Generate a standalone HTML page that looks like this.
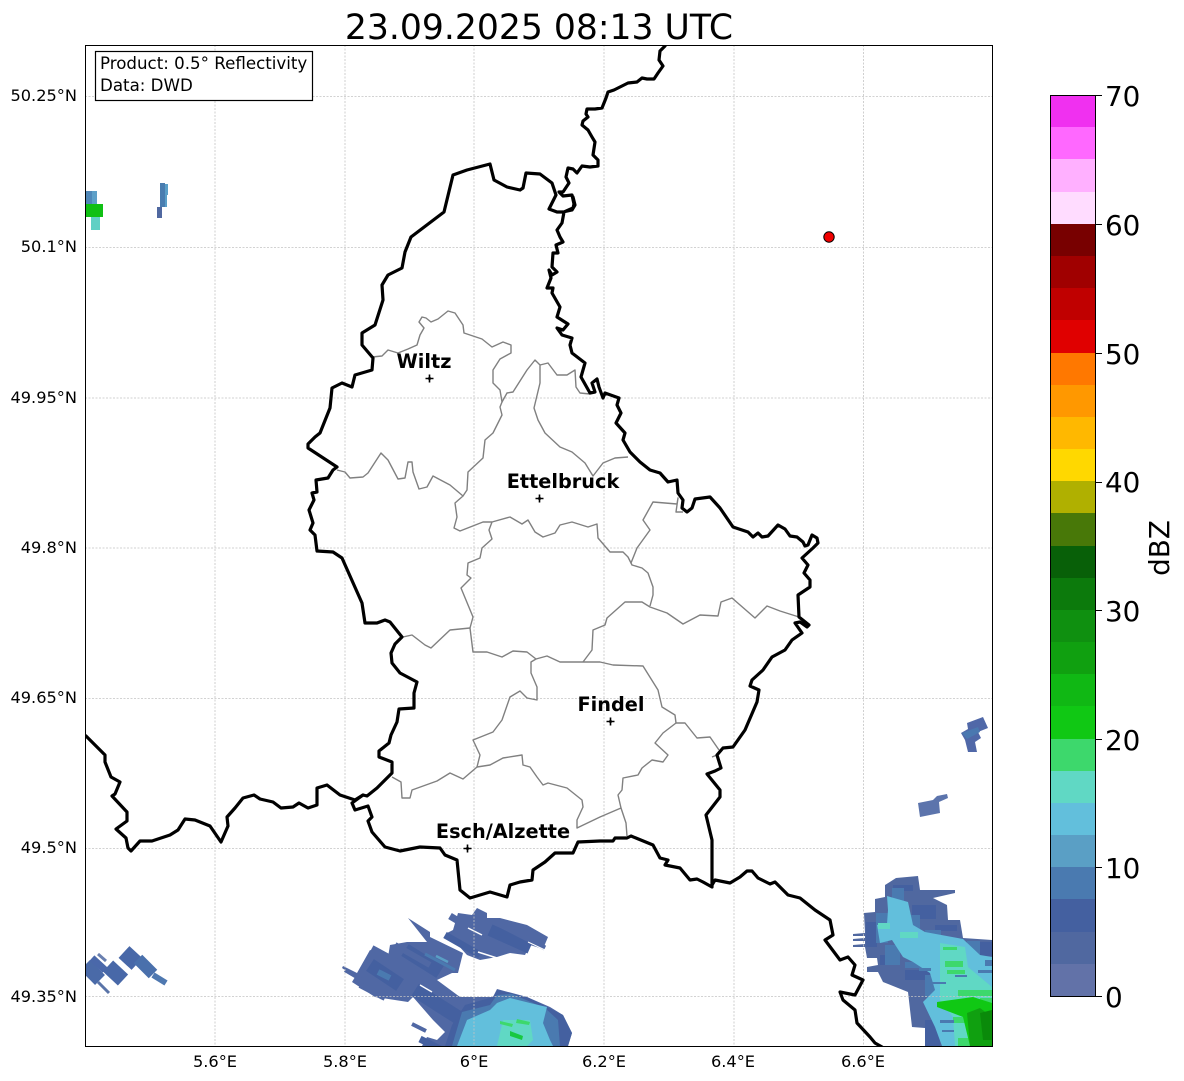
<!DOCTYPE html>
<html>
<head>
<meta charset="utf-8">
<title>Radar</title>
<style>
html,body{margin:0;padding:0;background:#fff;width:1184px;height:1081px;overflow:hidden}
svg{display:block}
text{font-family:"DejaVu Sans","Liberation Sans",sans-serif;fill:#000}
.tick{font-size:16.2px}
.cb{font-size:27.8px}
.st{font-size:19.3px;font-weight:bold;text-anchor:middle}
.g{stroke:#c4c4c4;stroke-width:.8;stroke-dasharray:2 1.5;fill:none}
.b{stroke:#000;stroke-width:3.2;fill:none;stroke-linejoin:round;stroke-linecap:round}
.c{stroke:#808080;stroke-width:1.4;fill:none;stroke-linejoin:round}
</style>
</head>
<body>
<svg width="1184" height="1081" viewBox="0 0 1184 1081" xmlns="http://www.w3.org/2000/svg">
<defs><clipPath id="ax"><rect x="85.5" y="45.5" width="907" height="1001"/></clipPath></defs>
<rect width="1184" height="1081" fill="#fff"/>
<text x="539" y="39" font-size="34.6" text-anchor="middle">23.09.2025 08:13 UTC</text>

<g clip-path="url(#ax)">
<!-- radar top-left -->
<rect x="86" y="191" width="6" height="13" fill="#4f87b8"/><rect x="92" y="191" width="5" height="13" fill="#5ea0c8"/>
<rect x="86" y="204" width="17" height="13" fill="#10c014"/>
<rect x="91" y="217" width="9" height="13" fill="#60d0c4"/>
<rect x="160" y="183" width="5" height="24" fill="#4a7db0"/><rect x="165" y="184" width="3" height="11" fill="#5b9fc8"/><rect x="165" y="195" width="2" height="12" fill="#5b9fc8"/>
<rect x="157" y="207" width="5" height="11" fill="#5068a0"/>

<!-- SW small blobs -->
<g fill="none" stroke-linecap="butt">
<path d="M85 965L100 980" stroke="#4a6aa8" stroke-width="14"/>
<path d="M92 958L105 970" stroke="#4a68aa" stroke-width="7"/>
<path d="M98 954L106 961" stroke="#6a80b0" stroke-width="3"/>
<path d="M108 966L123 980" stroke="#4868a8" stroke-width="15"/>
<path d="M98 982L109 993" stroke="#5a74a8" stroke-width="3"/>
<path d="M124 952L137 964" stroke="#4868a8" stroke-width="16"/>
<path d="M138 959L153 974" stroke="#4a70ac" stroke-width="12"/>
<path d="M153 975L166 983" stroke="#4f78b0" stroke-width="6"/>
</g>

<!-- bottom centre blobs -->
<polygon fill="#5068a4" points="458,913 472,915 477,908 487,913 487,918 500,918 527,925 548,937 543,949 530,945 525,955 510,953 497,957 480,960 467,955 447,933 453,930"/>
<polygon fill="#5068a4" points="408,918 430,932 430,937 463,953 458,973 452,973 437,980 460,997 493,997 497,989 527,997 550,1007 563,1015 572,1033 568,1046 422,1046 427,1037 437,1040 445,1032 433,1020 413,997 408,1002 375,997 352,982 355,977 342,968 343,966 357,973 370,950 388,957 390,945 407,942 427,942"/>
<g fill="none" stroke="#4460a0">
<path d="M370 965L400 985" stroke-width="14"/>
<path d="M405 950L440 972" stroke-width="14"/>
<path d="M415 990L470 1025" stroke-width="14"/>
<path d="M490 930L530 948" stroke-width="12"/>
<path d="M445 935L480 955" stroke-width="7"/>
</g>
<g fill="none" stroke="#5068a4">
<path d="M345 970L362 980" stroke-width="4"/>
<path d="M450 916L470 928" stroke-width="7"/>
<path d="M500 925L545 948" stroke-width="5"/>
<path d="M372 948L398 962" stroke-width="6"/>
<path d="M395 945L430 965" stroke-width="6"/>
<path d="M360 985L385 998" stroke-width="6"/>
</g>
<g fill="none" stroke="#fff">
<path d="M468 928L482 935" stroke-width="1.500"/>
<path d="M478 952L497 958" stroke-width="1.500"/>
<path d="M420 985L432 992" stroke-width="1.500"/>
<path d="M528 942L545 950" stroke-width="1"/>
</g>
<path d="M378 972L390 978" stroke="#4a7ab0" stroke-width="6"/>
<path d="M436 956L448 962" stroke="#5a9fc5" stroke-width="2.500"/>
<path d="M425 954L455 970" stroke="#4a7ab0" stroke-width="3"/>
<polygon fill="#4460a0" points="445,1046 452,1025 465,1005 493,997 497,990 527,997 563,1015 572,1033 568,1046"/>
<polygon fill="#4a7ab0" points="452,1046 462,1012 490,1005 497,995 512,994 545,1008 558,1020 560,1046"/>
<polygon fill="#62bfdc" points="457,1046 467,1020 490,1010 497,1003 510,998 530,1003 547,1007 543,1023 550,1040 553,1046"/>
<polygon fill="#60d8c4" points="503,1020 530,1020 533,1040 527,1046 497,1046"/>
<polygon fill="#3dd86c" points="500,1021 513,1024 512,1027 500,1024"/>
<polygon fill="#3dd86c" points="517,1019 530,1022 529,1025 516,1023"/>
<polygon fill="#18c840" points="510,1031 523,1036 522,1040 510,1036"/>
<path d="M412 1024L426 1031" stroke="#5068a4" stroke-width="4" fill="none"/>
<path d="M420 1039L440 1049" stroke="#4460a0" stroke-width="7" fill="none"/>

<!-- SE blob -->
<polygon fill="#5068a0" points="896,878 918,876 920,890 955,890 955,893 933,898 947,905 948,920 960,920 963,938 992,940 992,1046 927,1046 925,1028 912,1027 908,992 883,982 878,972 867,972 867,967 878,965 877,958 867,958 865,947 853,947 853,945 865,944 865,941 853,941 853,939 865,938 865,936 853,936 853,934 865,933 864,913 875,912 875,899 885,897 885,885"/>
<g fill="#4460a0">
<rect x="866" y="922" width="11" height="25"/>
<rect x="880" y="955" width="15" height="10"/>
<rect x="893" y="885" width="20" height="6"/>
<rect x="912" y="905" width="24" height="14"/>
<rect x="905" y="970" width="25" height="10"/>
<rect x="935" y="925" width="22" height="6"/>
<rect x="925" y="1020" width="15" height="26"/>
<rect x="980" y="942" width="12" height="14"/>
</g>
<g fill="#4a7ab0">
<rect x="876" y="913" width="12" height="30"/>
<rect x="892" y="888" width="12" height="14"/>
<rect x="900" y="915" width="20" height="18"/>
<rect x="885" y="945" width="15" height="20"/>
<rect x="925" y="930" width="16" height="10"/>
<rect x="967" y="941" width="13" height="14"/>
<rect x="905" y="962" width="20" height="6"/>
<rect x="925" y="975" width="12" height="22"/>
</g>
<polygon fill="#62bfdc" points="887,896 908,902 913,925 925,932 963,939 980,955 992,957 992,1046 942,1046 935,1027 923,1002 935,990 930,973 913,962 903,957 892,940 880,943 877,925 887,924 888,910"/>
<polygon fill="#60d8c4" points="940,943 965,947 968,967 992,987 992,1046 955,1046 953,1017 940,1000 940,963"/>
<rect x="878" y="923" width="12" height="6" fill="#60d8c4"/>
<rect x="900" y="932" width="18" height="6" fill="#60d8c4"/>
<g fill="#3dd86c">
<rect x="945" y="961" width="18" height="6"/>
<rect x="943" y="947" width="14" height="3"/>
<rect x="947" y="970" width="18" height="4"/>
<rect x="958" y="990" width="34" height="6"/>
<rect x="953" y="1017" width="14" height="6"/>
<rect x="958" y="1038" width="12" height="8"/>
<rect x="980" y="998" width="12" height="10"/>
</g>
<g fill="#4a7ab0">
<rect x="919" y="968" width="12" height="3"/>
<rect x="932" y="982" width="14" height="2"/>
<rect x="955" y="975" width="12" height="2"/>
<rect x="940" y="1020" width="14" height="3"/>
<rect x="942" y="1030" width="12" height="2"/>
<rect x="985" y="960" width="7" height="6"/>
<rect x="978" y="970" width="14" height="3"/>
</g>
<polygon fill="#10c814" points="937,1002 973,997 992,1003 992,1046 970,1046 963,1017 937,1007"/>
<polygon fill="#10a010" points="967,1013 980,1008 992,1017 992,1046 970,1046"/>
<polygon fill="#0a8a0a" points="980,1013 992,1010 992,1040 983,1040"/>

<!-- E small blobs -->
<polygon fill="#5068a8" points="967,723 983,717 988,728 978,732 981,738 975,742 977,752 968,752 965,740 961,733 968,729"/>
<polygon fill="#4a78b0" points="962,733 978,727 980,732 967,739"/>
<polygon fill="#5c74ac" points="918,803 933,800 937,796 947,794 948,798 939,802 940,813 920,817"/>

<!-- grid -->
<g class="g">
<path d="M215 45V1046M345 45V1046M474 45V1046M604 45V1046M734 45V1046M863.500 45V1046"/>
<path d="M85 96.500H992M85 247.500H992M85 398H992M85 548H992M85 698.500H992M85 848.500H992M85 996.500H992"/>
</g>

<!-- interior gray -->
<g class="c">
<path d="M372 357L382 356L388 350L398 353L408 349L417 345L420 335L424 328L419 322L422 317L426 318L431 322L438 319L448 311L455 313L463 325L464 333L482 339L492 347L503 342L511 345L511 353L500 359L493 370L493 383L500 390L502 402L500 407L502 415L493 433L485 440L483 458L468 472L467 490L463 496"/>
<path d="M502 402L507 393L513 392L527 370L535 360L540 365L540 383L534 408L538 420L545 433L560 447L572 452L585 463L593 476L603 463L615 458L628 457"/>
<path d="M540 365L548 363L557 375L567 375L575 370L576 387L580 393L590 394"/>
<path d="M337 470L345 472L350 478L363 477L368 473L381 453L388 460L398 479L405 478L408 462L412 462L413 472L419 489L427 487L433 476L450 485L463 496L455 503L457 517L454 528L460 531L483 522L492 522L510 517L522 524L528 520L535 532L543 537L555 533L560 525L572 522L588 527L597 524L598 538L610 552L623 552L628 557L631 563"/>
<path d="M492 522L489 530L492 539L482 548L480 558L468 563L467 575L471 578L461 588L473 617L470 628"/>
<path d="M403 637L412 635L425 645L431 648L450 630L470 628L473 652L487 652L502 657L513 651L527 652L536 659L547 656L560 662L583 662L600 662L613 665L643 666L658 690L662 707L675 715L676 723L685 723L697 738L710 737L719 750"/>
<path d="M676 723L663 733L655 743L668 755L663 762L652 760L642 768L638 775L623 778L622 790L618 795L621 808L626 823L627 836"/>
<path d="M621 808L600 817L577 828L577 820L583 807L582 800L567 788L548 783L543 785L537 777L530 767L523 765L522 755L503 758L490 765L477 767L480 755L473 740L493 732L502 720L510 697L520 691L527 698L537 700L537 687L531 673L531 662L536 659"/>
<path d="M477 767L463 779L450 773L437 781L412 790L410 798L402 798L401 782L392 777"/>
<path d="M583 662L592 650L593 630L605 625L607 618L625 602L642 602L650 607L667 613L683 624L700 615L718 616L721 602L732 598L755 618L767 606L780 611L799 617"/>
<path d="M650 606L653 595L653 587L648 573L642 568L632 565L631 563L637 548L650 530L643 520L653 502L677 504L678 498L676 512L683 512"/>
<path d="M712 757L717 755"/>
</g>

<!-- borders -->
<g class="b">
<path d="M665 46L660 51L659 60L663 66L658 73L654 79L647 79L642 78L637 82L628 83L620 87L614 90L608 92L606 98L602 108L595 109L587 109L586 114L588 117L583 121L582 125L588 130L592 137L595 142L593 155L598 160L598 166L590 167L582 166L577 173L573 169L568 168L566 177L569 183L563 192L559 192L563 196L572 195L574 204L573 208L564 212L562 223L557 230L560 237L563 242L556 245L558 253L553 253L552 267L557 272L552 275L549 270L551 278L547 288L553 288L552 293L560 307L557 317L568 324L563 330L557 328L562 335L572 338L570 345L572 353L585 363L581 377L590 393L595 392L592 383L597 379L599 387L603 398L605 393L619 398L617 405L621 413L616 423L625 433L623 440L630 452L640 462L650 470L660 473L668 482L677 480L678 493L683 500L682 508L687 512L692 508L695 499L710 497L720 508L733 527L748 532L753 537L758 533L762 537L768 536L778 525L785 529L790 536L797 537L803 542L805 546L808 545L812 535L817 538L818 543L813 548L802 558L808 565L804 573L810 580L810 587L798 595L799 617L809 625L807 627L800 622L795 623L802 633L792 640L785 650L772 657L763 670L752 680L750 686L759 690L757 702L748 723L745 730L733 747L723 748L717 755L721 768L715 771L707 774L720 790L720 797L706 815L712 840L712 887L703 882L697 879L690 880L680 868L665 865L668 860L660 858L653 845L631 836L627 838L615 838L613 841L600 841L578 842L573 853L555 853L545 862L533 870L532 880L520 882L510 885L507 897L490 892L470 898L460 890L457 860L445 855L440 848L420 847L400 851L385 847L372 832L368 821L372 817L368 806L355 810L352 803L363 795L367 796L377 788L392 773L392 762L379 757L379 751L389 743L391 735L397 722L399 709L414 708L414 693L417 682L400 673L392 663L391 653L395 644L402 637L390 622L385 620L377 623L365 623L362 603L342 558L333 552L317 551L315 535L310 530L313 523L309 510L314 500L312 493L317 492L316 480L328 478L333 470L337 467L308 448L308 444L315 437L320 433L330 408L332 388L342 383L352 387L355 375L372 370L373 358L362 345L362 333L375 325L383 300L382 285L388 275L402 268L405 252L411 237L444 212L453 175L467 170L490 164L494 180L507 187L520 190L523 188L526 173L540 174L552 183L556 195L549 209L557 212L563 212L572 210L575 205L573 197"/>
<path d="M86 736L105 755L105 762L111 777L120 782L115 794L112 796L127 812L127 821L116 829L126 838L128 848L131 851L140 841L152 841L170 835L178 830L185 819L195 820L210 826L221 842L228 826L227 817L235 808L243 798L254 795L260 799L273 802L281 808L293 807L299 803L308 808L317 805L317 788L327 785L340 795L355 800L363 795"/>
<path d="M712 885L715 880L730 883L740 877L747 871L752 871L758 878L770 884L775 882L788 895L800 898L815 910L830 920L833 935L825 940L840 960L848 957L855 965L852 975L863 980L855 995L840 992L843 1000L855 1010L857 1023L870 1037L875 1043L882 1047"/>
</g>

<!-- red dot -->
<circle cx="829" cy="237" r="5.200" fill="#f00000" stroke="#000" stroke-width="1"/>

<!-- stations -->
<g stroke="#000" stroke-width="1.600" fill="none">
<path d="M425.500 378.500H433.500M429.500 374.500V382.500M535.500 498.500H543.500M539.500 494.500V502.500M606.500 721.500H614.500M610.500 717.500V725.500M463.500 848.500H471.500M467.500 844.500V852.500"/>
</g>
<g fill="#000"><circle cx="429.500" cy="378.500" r="1.500"/><circle cx="539.500" cy="498.500" r="1.500"/><circle cx="610.500" cy="721.500" r="1.500"/><circle cx="467.500" cy="848.500" r="1.500"/></g>
<text class="st" x="424" y="368">Wiltz</text>
<text class="st" x="563" y="488">Ettelbruck</text>
<text class="st" x="611" y="711">Findel</text>
<text class="st" x="503" y="838">Esch/Alzette</text>

<!-- legend box -->
<rect x="95.500" y="51.500" width="217" height="49" fill="#fff" stroke="#000" stroke-width="1.200"/>
<text x="100" y="69" font-size="16.670">Product: 0.5° Reflectivity</text>
<text x="100" y="91" font-size="16.670">Data: DWD</text>
</g>
<rect x="85.500" y="45.500" width="907" height="1001" fill="none" stroke="#000" stroke-width="1"/>

<!-- axis ticks labels -->
<g class="tick" text-anchor="end">
<text x="77" y="101">50.25°N</text>
<text x="77" y="252">50.1°N</text>
<text x="77" y="403">49.95°N</text>
<text x="77" y="553">49.8°N</text>
<text x="77" y="703">49.65°N</text>
<text x="77" y="853">49.5°N</text>
<text x="77" y="1002">49.35°N</text>
</g>
<g class="tick" text-anchor="middle">
<text x="215" y="1067">5.6°E</text>
<text x="345" y="1067">5.8°E</text>
<text x="474" y="1067">6°E</text>
<text x="604" y="1067">6.2°E</text>
<text x="733" y="1067">6.4°E</text>
<text x="863" y="1067">6.6°E</text>
</g>

<!-- colorbar -->
<g shape-rendering="crispEdges">
<rect x="1051" y="96" width="45" height="33" fill="#f030f0"/>
<rect x="1051" y="127" width="45" height="33" fill="#ff68ff"/>
<rect x="1051" y="159" width="45" height="33" fill="#ffb0ff"/>
<rect x="1051" y="192" width="45" height="33" fill="#ffdcff"/>
<rect x="1051" y="224" width="45" height="33" fill="#780000"/>
<rect x="1051" y="256" width="45" height="33" fill="#a00000"/>
<rect x="1051" y="288" width="45" height="33" fill="#c00000"/>
<rect x="1051" y="320" width="45" height="33" fill="#e00000"/>
<rect x="1051" y="353" width="45" height="33" fill="#ff7800"/>
<rect x="1051" y="385" width="45" height="33" fill="#ff9800"/>
<rect x="1051" y="417" width="45" height="33" fill="#ffb800"/>
<rect x="1051" y="449" width="45" height="33" fill="#ffd800"/>
<rect x="1051" y="481" width="45" height="33" fill="#b0b000"/>
<rect x="1051" y="513" width="45" height="33" fill="#487808"/>
<rect x="1051" y="546" width="45" height="33" fill="#086008"/>
<rect x="1051" y="578" width="45" height="33" fill="#0c7a0c"/>
<rect x="1051" y="610" width="45" height="33" fill="#0f9010"/>
<rect x="1051" y="642" width="45" height="33" fill="#10a010"/>
<rect x="1051" y="674" width="45" height="33" fill="#10b814"/>
<rect x="1051" y="706" width="45" height="33" fill="#10c814"/>
<rect x="1051" y="739" width="45" height="33" fill="#3dd86c"/>
<rect x="1051" y="771" width="45" height="33" fill="#60d8c4"/>
<rect x="1051" y="803" width="45" height="33" fill="#62bfdc"/>
<rect x="1051" y="835" width="45" height="33" fill="#5a9fc5"/>
<rect x="1051" y="867" width="45" height="33" fill="#4a7ab0"/>
<rect x="1051" y="899" width="45" height="33" fill="#4460a0"/>
<rect x="1051" y="932" width="45" height="32" fill="#5068a0"/>
<rect x="1051" y="964" width="45" height="32" fill="#6272a8"/>
</g>
<rect x="1050.500" y="95.500" width="45" height="901" fill="none" stroke="#000" stroke-width="1"/>
<path d="M1096 95.500h6M1096 224.500h6M1096 353.500h6M1096 482.500h6M1096 610.500h6M1096 739.500h6M1096 867.500h6M1096 996.500h6" stroke="#000" stroke-width="1"/>
<g class="cb">
<text x="1105" y="106">70</text>
<text x="1105" y="235">60</text>
<text x="1105" y="364">50</text>
<text x="1105" y="492">40</text>
<text x="1105" y="621">30</text>
<text x="1105" y="750">20</text>
<text x="1105" y="878">10</text>
<text x="1105" y="1007">0</text>
</g>
<text class="cb" transform="translate(1169,548) rotate(-90)" text-anchor="middle">dBZ</text>
</svg>
</body>
</html>
